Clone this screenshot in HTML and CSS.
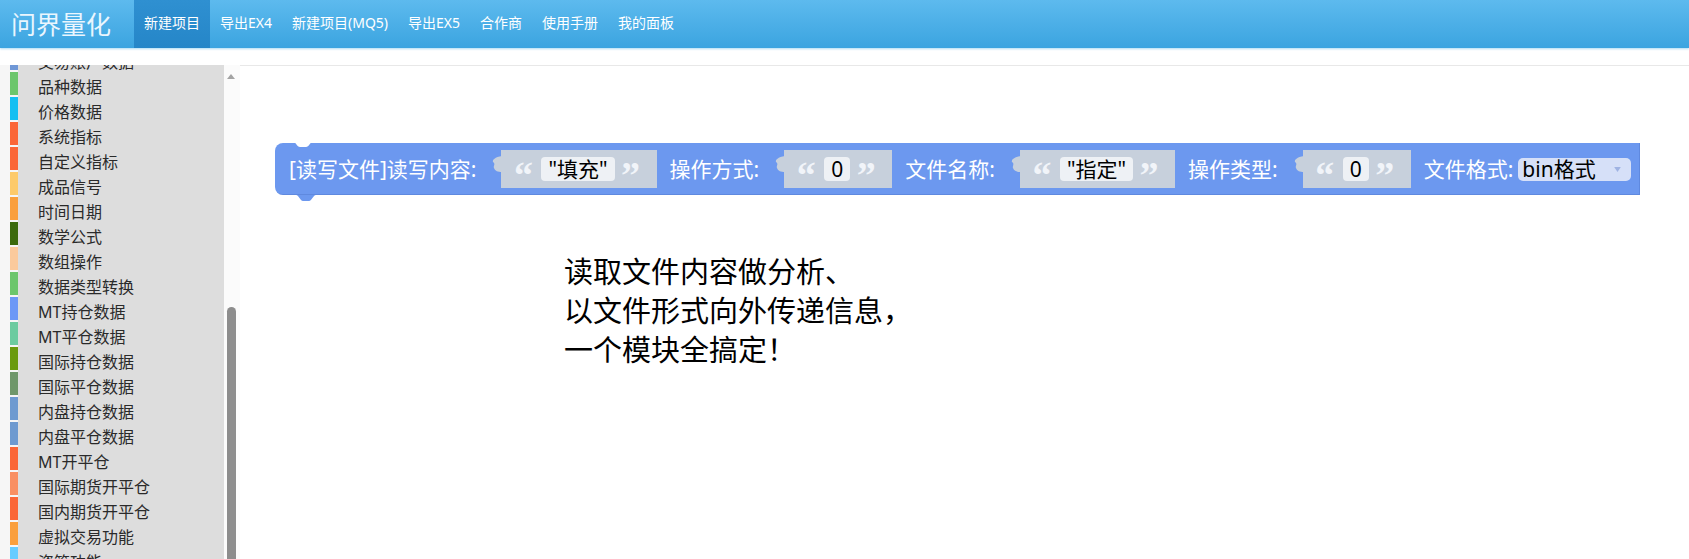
FILE: index.html
```html
<!DOCTYPE html>
<html lang="zh-CN">
<head>
<meta charset="utf-8">
<title>问界量化</title>
<link rel="stylesheet" href="styles.css">
</head>
<body>
<header class="navbar">
  <div class="brand">问界量化</div>
  <nav class="nav">
    <a class="nav-item active">新建项目</a>
    <a class="nav-item">导出EX4</a>
    <a class="nav-item">新建项目(MQ5)</a>
    <a class="nav-item">导出EX5</a>
    <a class="nav-item">合作商</a>
    <a class="nav-item">使用手册</a>
    <a class="nav-item">我的面板</a>
  </nav>
</header>
<div class="main">
  <aside class="sidebar">
    <div class="toolbox">
      <ul class="cat-list">
        <li class="cat"><span class="swatch c-acct"></span><span class="cat-label">交易账户数据</span></li>
        <li class="cat"><span class="swatch c-green"></span><span class="cat-label">品种数据</span></li>
        <li class="cat"><span class="swatch c-cyan"></span><span class="cat-label">价格数据</span></li>
        <li class="cat"><span class="swatch c-red"></span><span class="cat-label">系统指标</span></li>
        <li class="cat"><span class="swatch c-red"></span><span class="cat-label">自定义指标</span></li>
        <li class="cat"><span class="swatch c-yellow"></span><span class="cat-label">成品信号</span></li>
        <li class="cat"><span class="swatch c-orange"></span><span class="cat-label">时间日期</span></li>
        <li class="cat"><span class="swatch c-dkgreen"></span><span class="cat-label">数学公式</span></li>
        <li class="cat"><span class="swatch c-peach"></span><span class="cat-label">数组操作</span></li>
        <li class="cat"><span class="swatch c-green"></span><span class="cat-label">数据类型转换</span></li>
        <li class="cat"><span class="swatch c-blue"></span><span class="cat-label">MT持仓数据</span></li>
        <li class="cat"><span class="swatch c-teal"></span><span class="cat-label">MT平仓数据</span></li>
        <li class="cat"><span class="swatch c-olive"></span><span class="cat-label">国际持仓数据</span></li>
        <li class="cat"><span class="swatch c-sage"></span><span class="cat-label">国际平仓数据</span></li>
        <li class="cat"><span class="swatch c-steel"></span><span class="cat-label">内盘持仓数据</span></li>
        <li class="cat"><span class="swatch c-steel"></span><span class="cat-label">内盘平仓数据</span></li>
        <li class="cat"><span class="swatch c-red"></span><span class="cat-label">MT开平仓</span></li>
        <li class="cat"><span class="swatch c-salmon"></span><span class="cat-label">国际期货开平仓</span></li>
        <li class="cat"><span class="swatch c-red"></span><span class="cat-label">国内期货开平仓</span></li>
        <li class="cat"><span class="swatch c-orange"></span><span class="cat-label">虚拟交易功能</span></li>
        <li class="cat"><span class="swatch c-sky"></span><span class="cat-label">资管功能</span></li>
      </ul>
    </div>
    <div class="scrollbar">
      <span class="scroll-up"></span>
      <span class="scroll-thumb"></span>
    </div>
  </aside>
  <section class="workspace">
    <div class="block">
      <svg class="notch" viewBox="0 0 20 6"><path d="M0,0 C3,0 4,5 7,5 L13,5 C16,5 17,0 20,0 Z" fill="#ffffff"/></svg>
      <svg class="next-tab" viewBox="0 0 20 6"><path d="M0,0 C3,0 4,6 7,6 L13,6 C16,6 17,0 20,0 Z" fill="#6c98ef"/></svg>
      <span class="blk-label">[读写文件]读写内容:</span>
      <span class="slot">
        <svg class="slot-tab" viewBox="0 0 10 16"><path d="M10,0 L10,16 C6,16 3,15 2,12 C1,10 4,8 1,6 C0,4 3,1 10,0 Z" fill="#c7d0dc"/></svg>
        <span class="quote">“</span><span class="field">"填充"</span><span class="quote">”</span>
      </span>
      <span class="blk-label">操作方式:</span>
      <span class="slot">
        <svg class="slot-tab" viewBox="0 0 10 16"><path d="M10,0 L10,16 C6,16 3,15 2,12 C1,10 4,8 1,6 C0,4 3,1 10,0 Z" fill="#c7d0dc"/></svg>
        <span class="quote">“</span><span class="field">0</span><span class="quote">”</span>
      </span>
      <span class="blk-label">文件名称:</span>
      <span class="slot">
        <svg class="slot-tab" viewBox="0 0 10 16"><path d="M10,0 L10,16 C6,16 3,15 2,12 C1,10 4,8 1,6 C0,4 3,1 10,0 Z" fill="#c7d0dc"/></svg>
        <span class="quote">“</span><span class="field">"指定"</span><span class="quote">”</span>
      </span>
      <span class="blk-label">操作类型:</span>
      <span class="slot">
        <svg class="slot-tab" viewBox="0 0 10 16"><path d="M10,0 L10,16 C6,16 3,15 2,12 C1,10 4,8 1,6 C0,4 3,1 10,0 Z" fill="#c7d0dc"/></svg>
        <span class="quote">“</span><span class="field">0</span><span class="quote">”</span>
      </span>
      <span class="blk-label before-dd">文件格式:</span>
      <span class="dropdown">
        <span class="dd-text">bin格式</span>
        <svg class="dd-arrow" viewBox="0 0 8 6"><path d="M0,0 L8,0 L4,6 Z" fill="#9fb3e3"/></svg>
      </span>
    </div>
    <p class="caption">读取文件内容做分析、<br>以文件形式向外传递信息，<br>一个模块全搞定！</p>
  </section>
</div>
</body>
</html>
```

FILE: styles.css
```css
* { box-sizing: border-box; }
html, body { margin: 0; padding: 0; }
body {
  width: 1689px;
  height: 559px;
  overflow: hidden;
  background: #ffffff;
  font-family: "Noto Sans", "Noto Sans CJK SC", sans-serif;
}

/* ---------- navbar ---------- */
.navbar {
  display: flex;
  height: 48px;
  background: linear-gradient(#5dbaee, #3ba4e0);
  box-shadow: 0 1px 2px rgba(70, 175, 230, 0.45);
  position: relative;
  z-index: 1;
}
.brand {
  flex: 0 0 134px;
  padding-left: 11px;
  font-family: "Noto Sans CJK SC", sans-serif;
  font-size: 25px;
  line-height: 47px;
  color: #eaf6fe;
  white-space: nowrap;
}
.nav { display: flex; }
.nav-item {
  padding: 0 10px;
  font-size: 14px;
  line-height: 46px;
  color: #ffffff;
  text-decoration: none;
  white-space: nowrap;
}
.nav-item.active { background: linear-gradient(#2f90d1, #2586c8); }

/* ---------- main ---------- */
.main {
  display: flex;
  margin-top: 17px;
  height: 494px;
}

/* ---------- sidebar / toolbox ---------- */
.sidebar {
  flex: 0 0 240px;
  display: flex;
  overflow: hidden;
}
.toolbox {
  flex: 0 0 224px;
  overflow: hidden;
  background: linear-gradient(to right, #f6f6f6 18px, #dddddd 18px);
}
.cat-list {
  list-style: none;
  margin: -18px 0 0;
  padding: 0;
}
.cat {
  display: flex;
  height: 25px;
}
.swatch {
  flex: 0 0 8px;
  height: 23px;
  margin-left: 10px;
}
.cat-label {
  margin-left: 20px;
  padding-top: 4px;
  font-size: 16px;
  line-height: 22px;
  color: #2a2a2a;
  white-space: nowrap;
}
.c-acct { background: #6f97d6; }
.c-green { background: #6cc66c; }
.c-cyan { background: #14bff2; }
.c-red { background: #fb6637; }
.c-yellow { background: #fdca6a; }
.c-orange { background: #fa9f3c; }
.c-dkgreen { background: #3b6a0c; }
.c-peach { background: #fbca9c; }
.c-blue { background: #6d98f6; }
.c-teal { background: #6ccba0; }
.c-olive { background: #6a9a0e; }
.c-sage { background: #6f976a; }
.c-steel { background: #6e9ad0; }
.c-salmon { background: #f98f62; }
.c-sky { background: #66ccff; }

.scrollbar {
  flex: 0 0 16px;
  background: #fbfbfb;
  display: flex;
  flex-direction: column;
  align-items: flex-start;
  padding-left: 3px;
}
.scroll-up {
  flex: none;
  width: 0;
  height: 0;
  border-left: 4.5px solid transparent;
  border-right: 4.5px solid transparent;
  border-bottom: 5px solid #a3a3a3;
  margin-top: 9px;
}
.scroll-thumb {
  flex: none;
  width: 9px;
  height: 400px;
  margin-top: 228px;
  background: #8d8d8d;
  border-radius: 5px;
}

/* ---------- workspace ---------- */
.workspace {
  flex: 1;
  border-top: 1px solid #e8e8e8;
  padding-top: 77px;
}
.block {
  position: relative;
  display: flex;
  align-items: center;
  width: max-content;
  height: 52px;
  margin-left: 35px;
  padding: 0 9px 0 14px;
  background: #6c98ef;
  border-radius: 8px 0 0 8px;
  box-shadow: inset -1px -1px 0 rgba(40, 70, 150, 0.18);
  font-size: 21px;
  color: #ffffff;
}
.notch {
  position: absolute;
  left: 18px;
  top: -1px;
  width: 20px;
  height: 6px;
}
.next-tab {
  position: absolute;
  left: 21px;
  bottom: -6px;
  width: 20px;
  height: 6px;
}
.blk-label {
  margin-right: 25px;
  white-space: nowrap;
  line-height: 1;
}
.blk-label.before-dd { margin-right: 5px; }
.slot {
  position: relative;
  display: flex;
  align-items: center;
  height: 38px;
  margin-right: 13px;
  padding: 0 14px 0 10px;
  background: #c7d0dc;
}
.slot-tab {
  position: absolute;
  left: -9px;
  top: 6px;
  width: 10px;
  height: 16px;
}
.quote {
  width: 24px;
  text-align: center;
  font-family: "Liberation Serif", serif;
  font-weight: bold;
  font-size: 38px;
  line-height: 38px;
  height: 38px;
  color: #f1f4f9;
  margin-top: 12px;
}
.field {
  margin: 0 4px 0 6px;
  padding: 0 7px;
  height: 24px;
  line-height: 24px;
  background: #eef1f5;
  border-radius: 4px;
  color: #000000;
  font-size: 21px;
  white-space: nowrap;
}
.dropdown {
  display: flex;
  align-items: center;
  height: 23px;
  padding: 0 10px 0 4px;
  background: #d6e0f8;
  border-radius: 5px;
  color: #000000;
}
.dd-text { line-height: 23px; white-space: nowrap; }
.dd-arrow {
  width: 7px;
  height: 5px;
  margin-left: 18px;
}

/* ---------- caption ---------- */
.caption {
  margin: 56px 0 0 324px;
  font-family: "Noto Sans CJK SC", sans-serif;
  font-size: 29px;
  line-height: 39px;
  color: #000000;
}
```
